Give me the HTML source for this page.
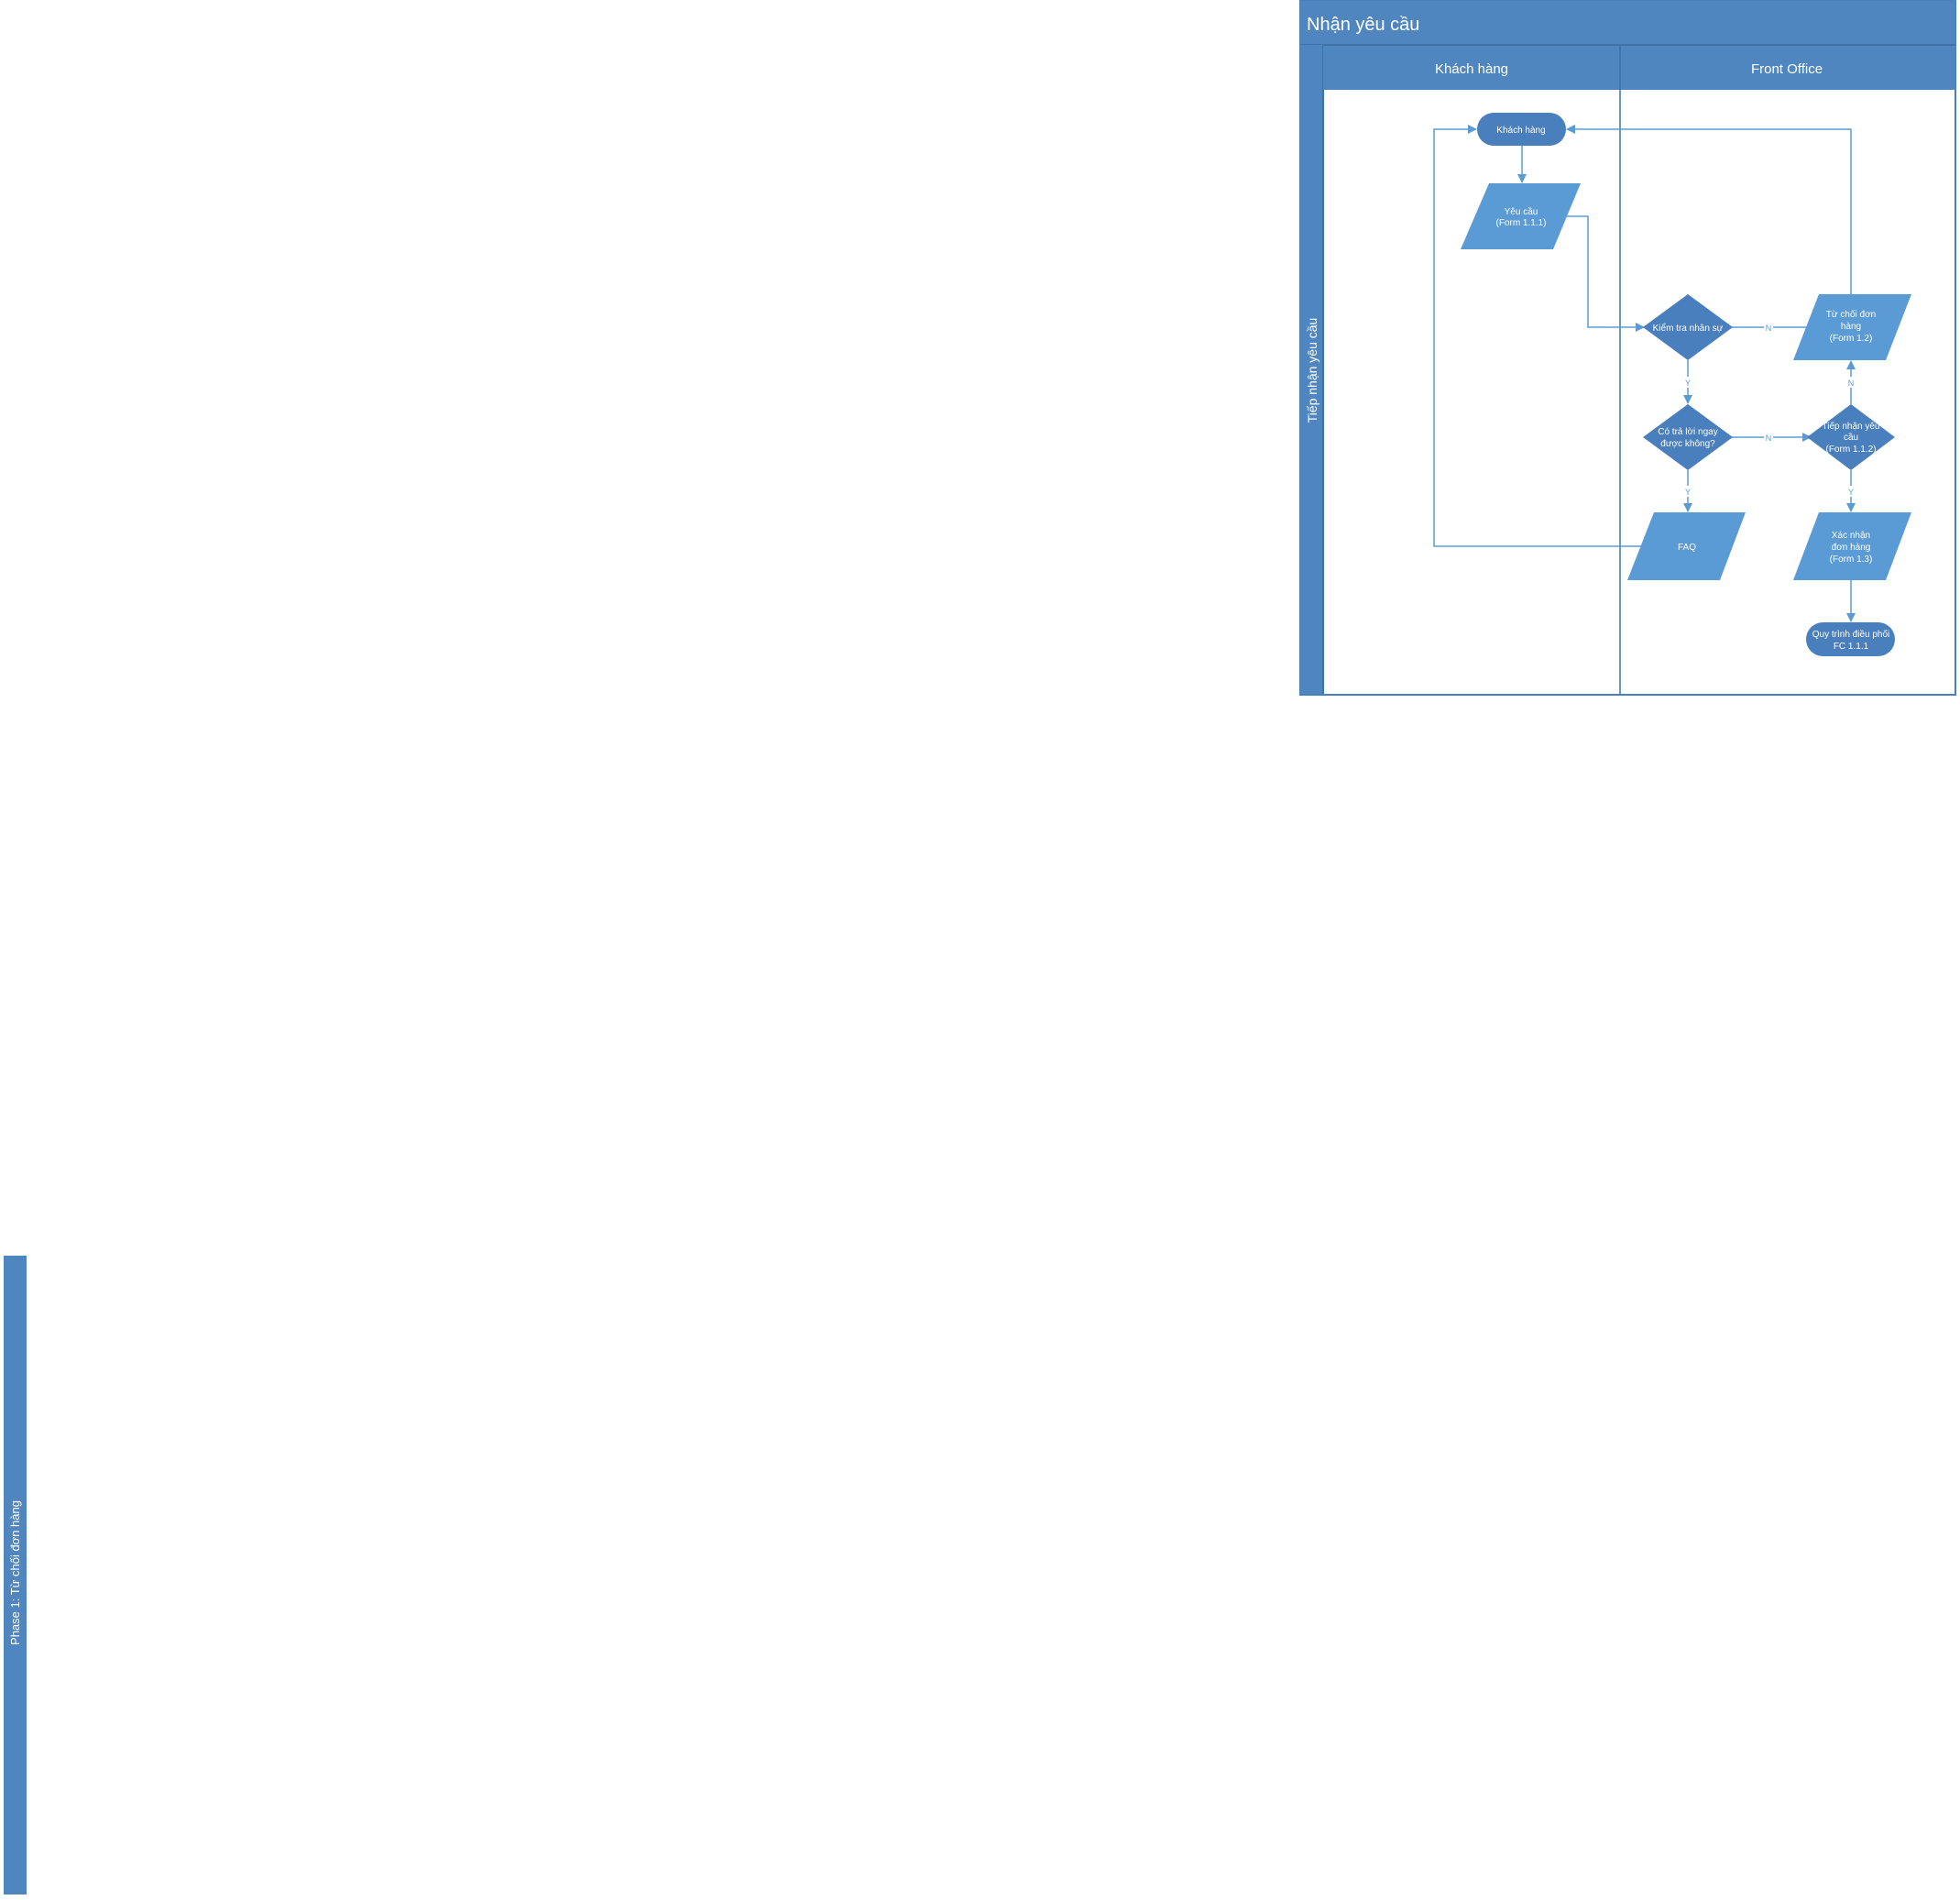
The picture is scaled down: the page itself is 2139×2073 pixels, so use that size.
<!DOCTYPE html>
<html><head><meta charset="utf-8"><style>
html,body{margin:0;padding:0;background:#fff;}
svg{display:block;}
text{font-family:"Liberation Sans","DejaVu Sans",sans-serif;fill:#fff;}
</style></head><body>
<svg width="2139" height="2073" viewBox="0 0 2139 2073" xmlns="http://www.w3.org/2000/svg">
<defs>
<marker id="a" markerWidth="10" markerHeight="10" refX="9" refY="5" orient="auto" markerUnits="userSpaceOnUse">
<path d="M0,0 L10,5 L0,10 Z" fill="#5b9bd5"/></marker>
</defs>
<rect x="1419" y="1" width="715" height="757" fill="#fff" stroke="#4a7fbd" stroke-width="2"/>
<rect x="1419" y="1" width="715" height="48" fill="#4f86bf"/>
<line x1="1419" y1="49" x2="2134" y2="49" stroke="#3f72a8" stroke-width="2"/>
<rect x="1419" y="49" width="25" height="709" fill="#4f86bf"/>
<line x1="1444" y1="49" x2="1444" y2="758" stroke="#3f72a8" stroke-width="2"/>
<rect x="1444" y="50" width="690" height="48" fill="#4f86bf"/>
<line x1="1768" y1="50" x2="1768" y2="758" stroke="#3f72a8" stroke-width="1.5"/>
<line x1="1419" y1="758" x2="2134" y2="758" stroke="#4a7fbd" stroke-width="2"/>
<text x="1426" y="33" font-size="20">Nhận yêu cầu</text>
<text x="1606" y="80" font-size="15" text-anchor="middle">Khách hàng</text>
<text x="1950" y="80" font-size="15" text-anchor="middle">Front Office</text>
<text transform="translate(1437,404) rotate(-90)" font-size="14" text-anchor="middle">Tiếp nhận yêu cầu</text>

<g fill="none" stroke="#5b9bd5" stroke-width="1.5">
<path d="M1661,159 V199" marker-end="url(#a)"/>
<path d="M1710,236 H1733 V357 H1794" marker-end="url(#a)"/>
<path d="M1890,357 H1982" marker-end="url(#a)"/>
<path d="M1842,393 V440" marker-end="url(#a)"/>
<path d="M1890,477 H1976" marker-end="url(#a)"/>
<path d="M2020,441 V394" marker-end="url(#a)"/>
<path d="M1842,513 V558" marker-end="url(#a)"/>
<path d="M2020,513 V558" marker-end="url(#a)"/>
<path d="M2020,633 V678" marker-end="url(#a)"/>
<path d="M1800,596 H1565 V141 H1611" marker-end="url(#a)"/>
<path d="M2020,321 V141 H1710" marker-end="url(#a)"/>
</g>
<g font-size="9" text-anchor="middle">
<rect x="1925" y="351" width="10" height="12" fill="#fff"/><text x="1930" y="361" style="fill:#5b9bd5">N</text>
<rect x="1925" y="471" width="10" height="12" fill="#fff"/><text x="1930" y="481" style="fill:#5b9bd5">N</text>
<rect x="1837" y="411" width="10" height="12" fill="#fff"/><text x="1842" y="421" style="fill:#5b9bd5">Y</text>
<rect x="2015" y="411" width="10" height="12" fill="#fff"/><text x="2020" y="421" style="fill:#5b9bd5">N</text>
<rect x="1837" y="530" width="10" height="12" fill="#fff"/><text x="1842" y="540" style="fill:#5b9bd5">Y</text>
<rect x="2015" y="530" width="10" height="12" fill="#fff"/><text x="2020" y="540" style="fill:#5b9bd5">Y</text>
</g>

<rect x="1612" y="123" width="97" height="36" rx="18" fill="#4a7fbd"/>
<text x="1660" y="145" font-size="10" text-anchor="middle">Khách hàng</text>

<polygon points="1625,200 1725,200 1695,272 1594,272" fill="#5b9bd5"/>
<text x="1660" y="234" font-size="10" text-anchor="middle">Yêu cầu</text>
<text x="1660" y="246" font-size="10" text-anchor="middle">(Form 1.1.1)</text>

<polygon points="1842,321 1891,357 1842,393 1793,357" fill="#4a7fbd"/>
<text x="1842" y="361" font-size="10" text-anchor="middle">Kiểm tra nhân sự</text>

<polygon points="1985,321 2086,321 2058,393 1957,393" fill="#5b9bd5"/>
<text x="2020" y="346" font-size="10" text-anchor="middle">Từ chối đơn</text>
<text x="2020" y="359" font-size="10" text-anchor="middle">hàng</text>
<text x="2020" y="372" font-size="10" text-anchor="middle">(Form 1.2)</text>

<polygon points="1842,441 1891,477 1842,513 1793,477" fill="#4a7fbd"/>
<text x="1842" y="474" font-size="10" text-anchor="middle">Có trả lời ngay</text>
<text x="1842" y="487" font-size="10" text-anchor="middle">được không?</text>

<polygon points="2020,441 2068,477 2020,513 1972,477" fill="#4a7fbd"/>
<text x="2020" y="468" font-size="10" text-anchor="middle">Tiếp nhận yêu</text>
<text x="2020" y="480" font-size="10" text-anchor="middle">cầu</text>
<text x="2020" y="493" font-size="10" text-anchor="middle">(Form 1.1.2)</text>

<polygon points="1805,559 1905,559 1877,633 1776,633" fill="#5b9bd5"/>
<text x="1841" y="600" font-size="10" text-anchor="middle">FAQ</text>

<polygon points="1985,559 2086,559 2058,633 1957,633" fill="#5b9bd5"/>
<text x="2020" y="587" font-size="10" text-anchor="middle">Xác nhận</text>
<text x="2020" y="600" font-size="10" text-anchor="middle">đơn hàng</text>
<text x="2020" y="613" font-size="10" text-anchor="middle">(Form 1.3)</text>

<rect x="1971" y="679" width="97" height="37" rx="18.5" fill="#4a7fbd"/>
<text x="2020" y="695" font-size="10" text-anchor="middle">Quy trình điều phối</text>
<text x="2020" y="708" font-size="10" text-anchor="middle">FC 1.1.1</text>

<rect x="4" y="1370" width="25" height="697" fill="#4f86bf"/>
<text transform="translate(21,1716) rotate(-90)" font-size="13" text-anchor="middle">Phase 1: Từ chối đơn hàng</text>
</svg>
</body></html>
